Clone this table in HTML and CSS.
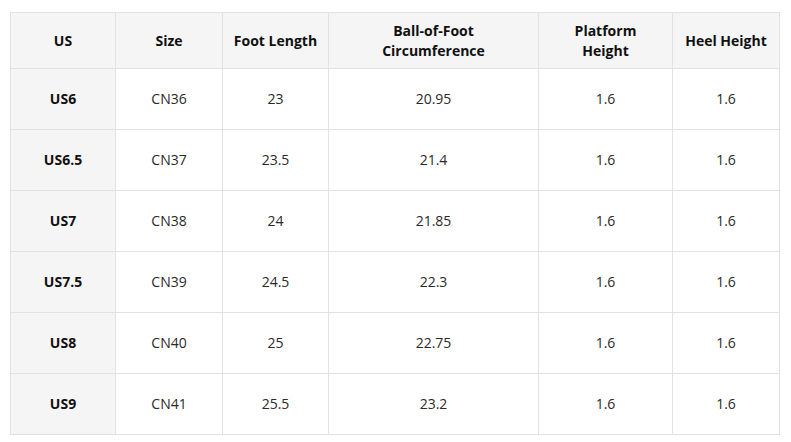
FILE: index.html
```html
<!DOCTYPE html>
<html>
<head>
<meta charset="utf-8">
<link rel="stylesheet" href="styles.css">
</head>
<body>
<table class="size-table">
  <colgroup>
    <col class="c1"><col class="c2"><col class="c3"><col class="c4"><col class="c5"><col class="c6">
  </colgroup>
  <thead>
    <tr>
      <th>US</th>
      <th>Size</th>
      <th>Foot Length</th>
      <th>Ball-of-Foot<br>Circumference</th>
      <th>Platform<br>Height</th>
      <th>Heel Height</th>
    </tr>
  </thead>
  <tbody>
    <tr><th>US6</th><td>CN36</td><td>23</td><td>20.95</td><td>1.6</td><td>1.6</td></tr>
    <tr><th>US6.5</th><td>CN37</td><td>23.5</td><td>21.4</td><td>1.6</td><td>1.6</td></tr>
    <tr><th>US7</th><td>CN38</td><td>24</td><td>21.85</td><td>1.6</td><td>1.6</td></tr>
    <tr><th>US7.5</th><td>CN39</td><td>24.5</td><td>22.3</td><td>1.6</td><td>1.6</td></tr>
    <tr><th>US8</th><td>CN40</td><td>25</td><td>22.75</td><td>1.6</td><td>1.6</td></tr>
    <tr><th>US9</th><td>CN41</td><td>25.5</td><td>23.2</td><td>1.6</td><td>1.6</td></tr>
  </tbody>
</table>
</body>
</html>
```
FILE: styles.css
```css
html, body {
  margin: 0;
  padding: 0;
  background: #ffffff;
}
body {
  padding: 12px 0 0 10px;
  font-family: "Open Sans", "Noto Sans", sans-serif;
  font-size: 14px;
  color: #333;
}
.size-table {
  border-collapse: collapse;
  table-layout: fixed;
  width: 769px;
}
.c1 { width: 105px; }
.c2 { width: 107px; }
.c3 { width: 106px; }
.c4 { width: 210px; }
.c5 { width: 134px; }
.c6 { width: 107px; }
.size-table th,
.size-table td {
  border: 1px solid #e2e2e2;
  text-align: center;
  vertical-align: middle;
  padding: 0 4px;
  line-height: 20px;
}
.size-table thead th {
  background: #f5f5f5;
  height: 55px;
  font-weight: 700;
  color: #111;
}
.size-table tbody th {
  background: #f5f5f5;
  font-weight: 700;
  color: #111;
}
.size-table tbody tr {
  height: 61px;
}
.size-table td {
  font-weight: 400;
  color: #2a2a2a;
}
```
